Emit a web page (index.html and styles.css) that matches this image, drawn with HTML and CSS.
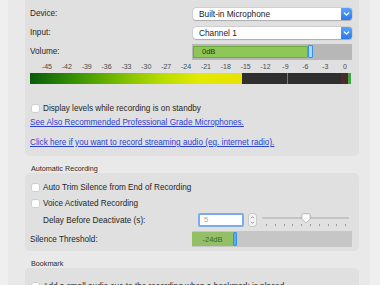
FILE: index.html
```html
<!DOCTYPE html>
<html>
<head>
<meta charset="utf-8">
<link rel="stylesheet" href="styles.css">
</head>
<body>
<div class="window">
  <div class="pane">
    <section class="group group-first">
      <div class="row">
        <span class="label">Device:</span>
        <div class="select"><span class="select-text">Built-in Microphone</span><span class="select-btn"><svg width="11" height="12" viewBox="0 0 11 12"><path d="M3.3 5 L5.5 7.2 L7.7 5" fill="none" stroke="#fff" stroke-width="1.2" stroke-linecap="round" stroke-linejoin="round"/></svg></span></div>
      </div>
      <div class="row">
        <span class="label">Input:</span>
        <div class="select"><span class="select-text">Channel 1</span><span class="select-btn"><svg width="11" height="12" viewBox="0 0 11 12"><path d="M3.3 5 L5.5 7.2 L7.7 5" fill="none" stroke="#fff" stroke-width="1.2" stroke-linecap="round" stroke-linejoin="round"/></svg></span></div>
      </div>
      <div class="row">
        <span class="label">Volume:</span>
        <div class="level level-volume">
          <div class="level-fill" style="width:115px"><span class="level-text">0dB</span></div>
          <div class="level-thumb"></div>
        </div>
      </div>
      <div class="scale">
        <span>-45</span><span>-42</span><span>-39</span><span>-36</span><span>-33</span><span>-30</span><span>-27</span><span>-24</span><span>-21</span><span>-18</span><span>-15</span><span>-12</span><span>-9</span><span>-6</span><span>-3</span><span>0</span>
      </div>
      <div class="meter">
        <div class="meter-lit"></div>
        <div class="meter-off"><span class="meter-peak"></span></div>
        <div class="meter-red"></div>
        <div class="meter-green"></div>
      </div>
      <div class="check-row check-spaced"><span class="checkbox"></span><span>Display levels while recording is on standby</span></div>
      <div class="link-row"><a class="link" href="#">See Also Recommended Professional Grade Microphones.</a></div>
      <div class="link-row link-row-2"><a class="link" href="#">Click here if you want to record streaming audio (eg. internet radio).</a></div>
    </section>

    <h3 class="group-title">Automatic Recording</h3>
    <section class="group group-auto">
      <div class="check-row"><span class="checkbox"></span><span>Auto Trim Silence from End of Recording</span></div>
      <div class="check-row check-row-tall"><span class="checkbox"></span><span>Voice Activated Recording</span></div>
      <div class="row row-delay">
        <span class="label label-indent">Delay Before Deactivate (s):</span>
        <div class="delay-controls">
          <div class="field">5</div>
          <div class="stepper"><svg width="7" height="12" viewBox="0 0 7 12"><path d="M2 4.2 L3.5 2.7 L5 4.2" fill="none" stroke="#7a7a7a" stroke-width="0.8"/><path d="M2 7.8 L3.5 9.3 L5 7.8" fill="none" stroke="#7a7a7a" stroke-width="0.8"/></svg></div>
          <div class="slider">
            <div class="slider-track"></div>
            <div class="slider-ticks"><i></i><i></i><i></i><i></i><i></i><i></i><i></i><i></i><i></i><i></i></div>
            <svg class="slider-thumb" width="10" height="11" viewBox="0 0 10 11"><path d="M1 1.5 Q1 0.8 1.7 0.8 H8.3 Q9 0.8 9 1.5 V5.8 L5 9.8 L1 5.8 Z" fill="#fff" stroke="#b5b5b5" stroke-width="0.7"/></svg>
          </div>
        </div>
      </div>
      <div class="row row-threshold">
        <span class="label">Silence Threshold:</span>
        <div class="level level-threshold">
          <div class="level-fill" style="width:41px"><span class="level-text">-24dB</span></div>
          <div class="level-thumb"></div>
        </div>
      </div>
    </section>

    <h3 class="group-title">Bookmark</h3>
    <section class="group group-bookmark">
      <div class="check-row"><span class="checkbox"></span><span>Add a small audio cue to the recording when a bookmark is placed</span></div>
    </section>
  </div>
</div>
</body>
</html>
```

FILE: styles.css
```css
html, body {
  margin: 0;
  padding: 0;
}
body {
  background: #efefef;
  font-family: "Liberation Sans", Arial, sans-serif;
  font-size: 8.2px;
  color: #262626;
  overflow: hidden;
  height: 285px;
}
.window {
  height: 285px;
  overflow: hidden;
}
.pane {
  margin-left: 8px;
  width: 362px;
  height: 300px;
  background: #e9e9e9;
  padding: 0 11px 0 17px;
  box-sizing: border-box;
}
.group {
  background: #e0e0e0;
  border-radius: 5px;
  padding: 0 7px 0 5px;
}
.group-first {
  margin-top: -6px;
  padding-top: 10px;
  padding-bottom: 6px;
}
.row {
  display: flex;
  align-items: center;
  height: 19px;
}
.label {
  width: 162px;
  flex: none;
  box-sizing: border-box;
}
.label-indent {
  padding-left: 13px;
}
.select {
  margin-left: 1px;
  width: 159px;
  height: 12px;
  background: #fff;
  border-radius: 3px;
  box-shadow: 0 0 0 0.5px rgba(0,0,0,0.12), 0 0.5px 1px rgba(0,0,0,0.18);
  display: flex;
  align-items: center;
  justify-content: space-between;
}
.select-text {
  padding-left: 6px;
  font-size: 8.3px;
  color: #222;
}
.select-btn {
  width: 11px;
  height: 12px;
  border-radius: 0 3px 3px 0;
  background: linear-gradient(#58a5fa, #2b78ec);
  display: flex;
}
.level {
  width: 160px;
  height: 16px;
  display: flex;
  align-items: center;
  box-sizing: border-box;
  padding-left: 1px;
}
.level-volume {
  background: #b7b7b7;
}
.level-threshold {
  background: #c6c6c6;
}
.level-fill {
  height: 12px;
  box-sizing: border-box;
  display: flex;
  align-items: center;
}
.level-volume .level-fill {
  background: #8ec658;
  border: 1px solid #71ab3d;
}
.level-volume .level-text {
  padding-left: 8px;
  font-size: 7.5px;
  color: #1d3a0e;
}
.level-threshold .level-fill {
  background: #94bf66;
  justify-content: center;
  height: 14px;
  margin-left: -1px;
}
.level-threshold .level-text {
  font-size: 7.5px;
  color: #3a6a28;
}
.level-thumb {
  width: 5px;
  height: 13px;
  box-sizing: border-box;
  background: #a9d6fc;
  border: 1.5px solid #3590e4;
  border-radius: 1px;
}
.level-threshold .level-thumb {
  height: 14px;
  width: 4px;
  background: #5aaaf0;
  border: 1px solid #3590e4;
}
.scale {
  height: 12px;
  line-height: 12px;
  display: grid;
  grid-template-columns: repeat(16, 19.875px);
  padding-left: 7px;
  font-size: 7px;
  color: #4a4a4a;
  text-align: center;
}
.meter {
  height: 11px;
  display: flex;
}
.meter-lit {
  width: 212px;
  background: linear-gradient(90deg, #0b5b0b 0%, #2f8a06 18%, #72b800 40%, #b8dc00 62%, #e3ea00 80%, #e8e200 100%);
}
.meter-off {
  flex: 1;
  background: #2f2f2f;
  position: relative;
}
.meter-peak {
  position: absolute;
  left: 45px;
  top: 0;
  width: 1px;
  height: 11px;
  background: #7a7a7a;
}
.meter-red {
  width: 7px;
  background: #4a2c2c;
}
.meter-green {
  width: 3px;
  background: #3da83d;
  margin-right: 1px;
}
.check-row {
  display: flex;
  align-items: center;
  height: 16px;
}
.check-row-tall {
  height: 17px;
}
.check-spaced {
  margin-top: 16px;
}
.checkbox {
  width: 7px;
  height: 7px;
  margin-left: 2px;
  margin-right: 4px;
  background: #fff;
  border-radius: 1.5px;
  box-shadow: 0 0 0 0.5px rgba(0,0,0,0.15);
  flex: none;
}
.link-row {
  height: 14px;
  line-height: 14px;
  white-space: nowrap;
}
.link-row-2 {
  margin-top: 6px;
}
.link {
  color: #2c42d2;
  text-decoration: underline;
}
.group-title {
  margin: 0;
  padding: 8px 0 0 6px;
  height: 9px;
  line-height: 9px;
  font-size: 7.2px;
  font-weight: normal;
  color: #2a2a2a;
  box-sizing: content-box;
}
.group-auto {
  padding-top: 6px;
  padding-bottom: 4px;
}
.group-bookmark {
  padding-top: 10px;
  height: 40px;
}
.row-delay {
  height: 16px;
}
.delay-controls {
  display: flex;
  align-items: center;
  margin-left: 6px;
}
.field {
  width: 46px;
  height: 14px;
  box-sizing: border-box;
  background: #fff;
  border: 2px solid #7aaceb;
  border-radius: 2px;
  color: #a8a8a8;
  font-size: 7.5px;
  line-height: 10px;
  padding-left: 4px;
}
.stepper {
  margin-left: 5px;
  width: 7px;
  height: 12px;
  background: #f3f3f3;
  border-radius: 2px;
  box-shadow: 0 0 0 0.5px rgba(0,0,0,0.2);
  display: flex;
}
.slider {
  position: relative;
  margin-left: 6px;
  width: 87px;
  height: 16px;
}
.slider-track {
  margin-top: 5px;
  height: 1.5px;
  background: #c4c4c4;
  border-radius: 1px;
}
.slider-ticks {
  margin-top: 5.5px;
  padding: 0 3px 0 4px;
  display: flex;
  justify-content: space-between;
}
.slider-ticks i {
  width: 0.8px;
  height: 2px;
  background: #9a9a9a;
}
.slider-thumb {
  position: absolute;
  left: 39px;
  top: 0.5px;
  filter: drop-shadow(0 0.5px 0.5px rgba(0,0,0,0.25));
}
.row-threshold {
  height: 16px;
  margin-top: 3px;
}
```
